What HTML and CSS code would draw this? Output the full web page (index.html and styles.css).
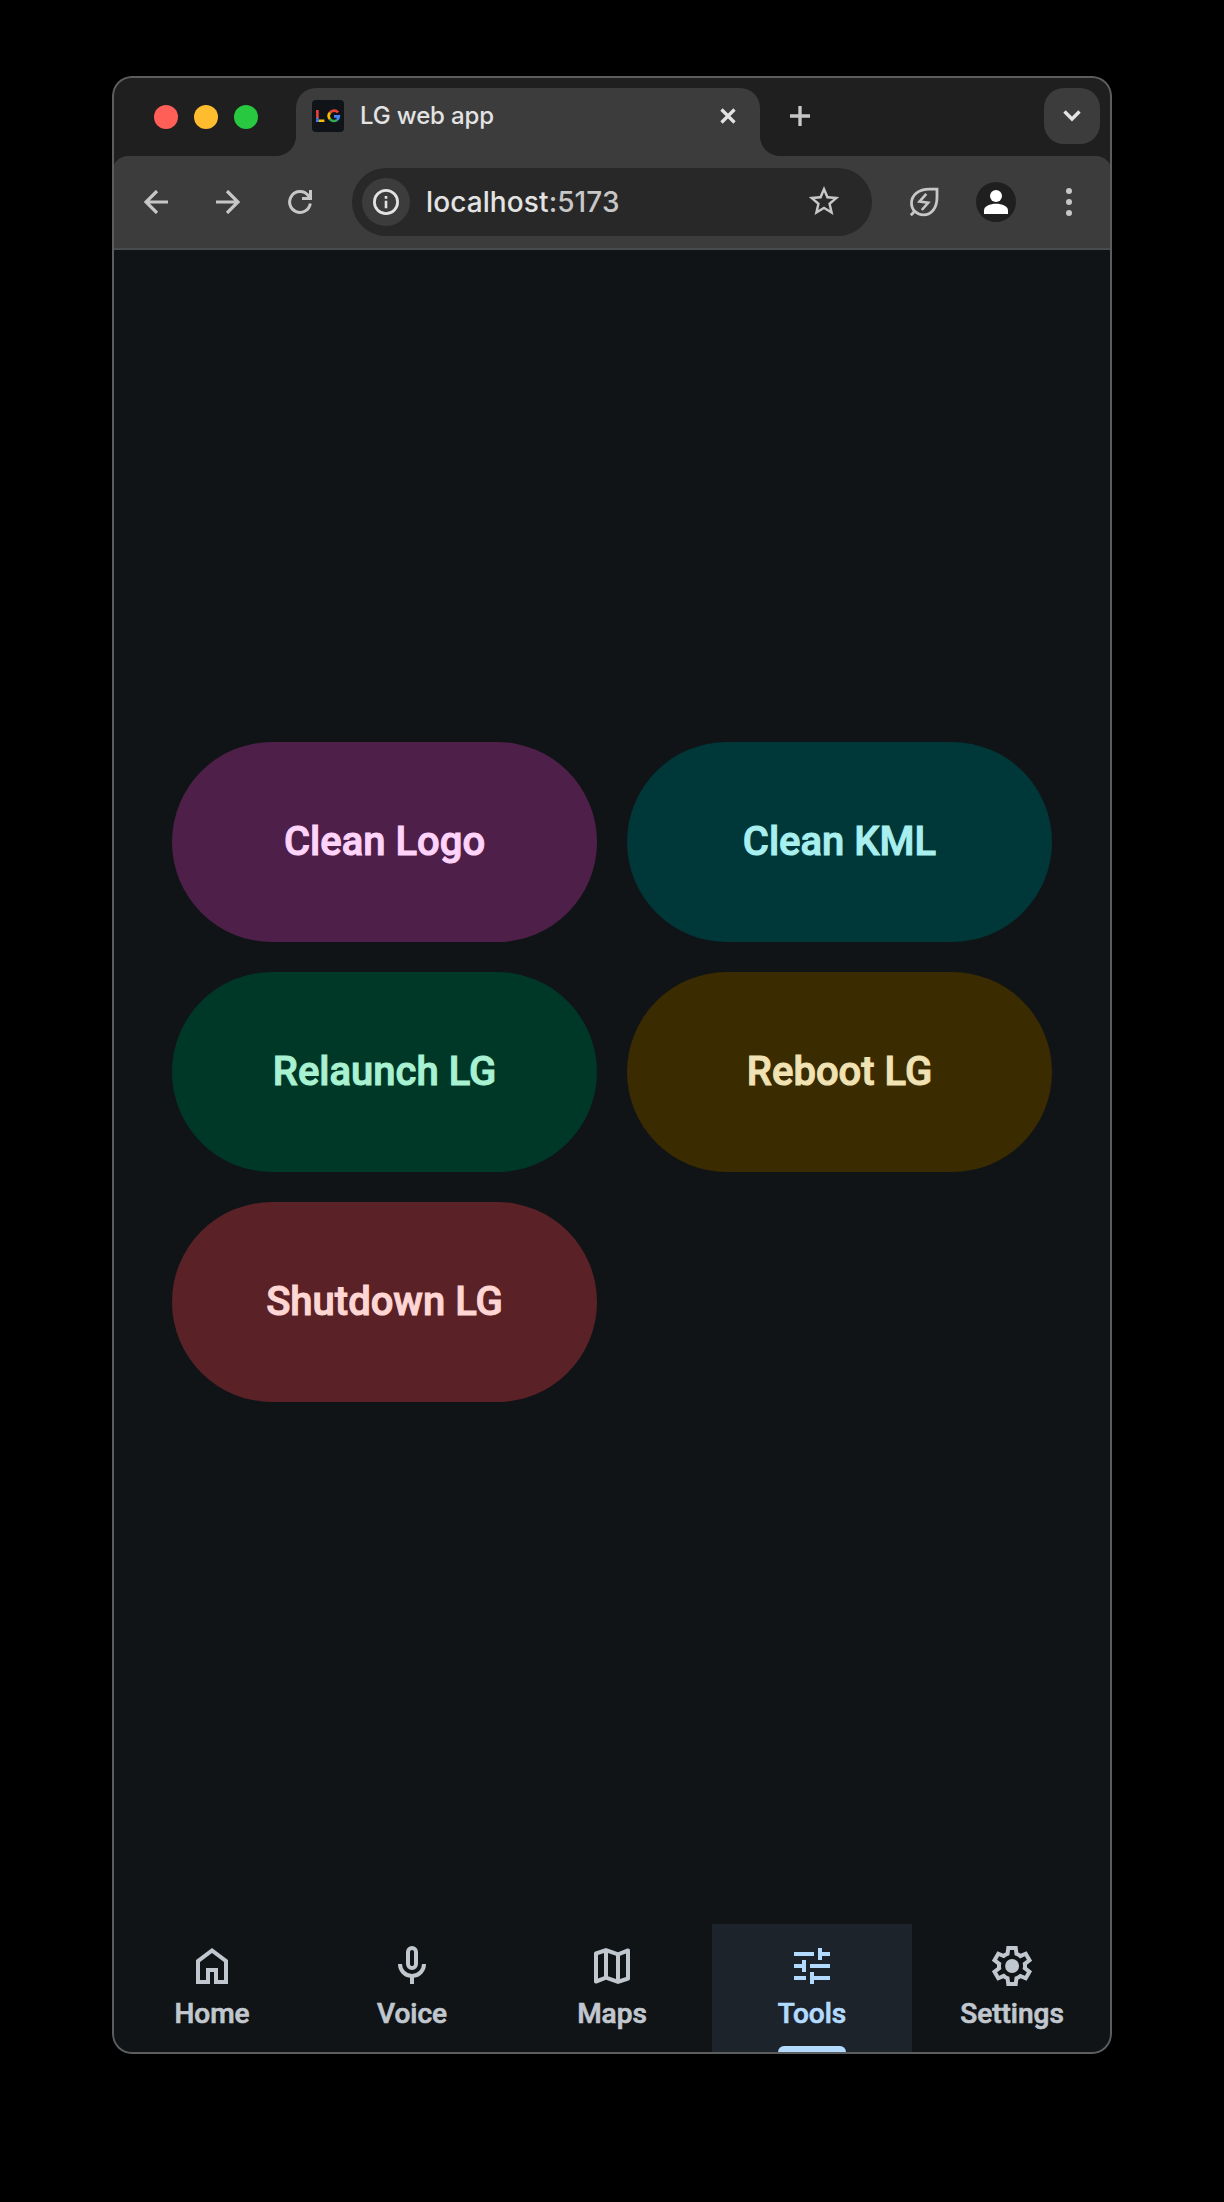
FILE: index.html
```html
<!DOCTYPE html>
<html lang="en">
<head>
<meta charset="utf-8">
<title>LG web app</title>
<link rel="stylesheet" href="styles.css">
</head>
<body>
<div class="window">
  <header class="tabstrip">
    <div class="lights"><span class="light red"></span><span class="light yellow"></span><span class="light green"></span></div>
    <div class="tab">
      <svg class="favicon" viewBox="0 0 32 32">
        <rect width="32" height="32" rx="4" fill="#101418"/>
        <path d="M5.400 10v8" stroke="#ea4335" stroke-width="2.600"/>
        <path d="M4.100 20.700H7" stroke="#4285f4" stroke-width="2.600"/>
        <path d="M4.100 18h2.600v1.500H4.100z" fill="#4285f4"/>
        <path d="M7 20.700h5.400" stroke="#fbbc04" stroke-width="2.600"/>
        <g fill="none" stroke-width="2.700">
          <path d="M26 12.400A5.200 5.200 0 0 0 18 12.600" stroke="#ea4335"/>
          <path d="M18 12.600A5.200 5.200 0 0 0 18 19.200" stroke="#fbbc04"/>
          <path d="M18 19.200A5.200 5.200 0 0 0 25 20" stroke="#34a853"/>
          <path d="M25 20A5.200 5.200 0 0 0 26.800 16.400H22" stroke="#4285f4"/>
        </g>
      </svg>
      <span class="tab-title">LG web app</span>
      <svg class="tab-close" viewBox="0 0 16 16"><path d="M1.500 1.500l13 13M14.500 1.500l-13 13" stroke="#e3e3e3" stroke-width="3.200"/></svg>
    </div>
    <svg class="new-tab" viewBox="0 0 20 20"><path d="M10 0v20M0 10h20" stroke="#c7c7c7" stroke-width="3.400"/></svg>
    <div class="tab-search"><svg width="18" height="12" viewBox="0 0 18 12"><path d="M1.500 1.500L9 9l7.500-7.500" fill="none" stroke="#e3e3e3" stroke-width="3.400"/></svg></div>
  </header>
  <div class="toolbar">
    <svg class="nav-btn back" viewBox="0 0 24 24"><path d="M24 12H2M13 1L2 12l11 11" fill="none" stroke="#c7c7c7" stroke-width="3.200"/></svg>
    <svg class="nav-btn forward" viewBox="0 0 24 24"><path d="M0 12h22M11 1l11 11-11 11" fill="none" stroke="#c7c7c7" stroke-width="3.200"/></svg>
    <svg class="nav-btn reload" viewBox="0 0 24 24"><path d="M22.300 13.500A10.400 10.400 0 1 1 20 5.300L22.500 8.500M22.500 0v8.500H14" fill="none" stroke="#c7c7c7" stroke-width="3"/></svg>
    <div class="omnibox">
      <span class="site-info"><svg width="26" height="26" viewBox="0 0 26 26"><circle cx="13" cy="13" r="11.600" fill="none" stroke="#e3e3e3" stroke-width="2.800"/><path d="M13 11.800v7.400M13 7v2.700" stroke="#e3e3e3" stroke-width="2.600"/></svg></span>
      <span class="url">localhost<span class="port">:5173</span></span>
      <svg class="star" viewBox="1.500 2 21 21"><path fill="#c7c7c7" d="M22 9.240l-7.190-.62L12 2 9.190 8.630 2 9.240l5.460 4.730L5.820 21 12 17.270 18.180 21l-1.630-7.030L22 9.240zM12 15.400l-3.760 2.270 1-4.280-3.320-2.880 4.380-.38L12 6.100l1.710 4.040 4.380.38-3.320 2.880 1 4.280L12 15.400z"/></svg>
    </div>
    <svg class="leaf" viewBox="0 0 32 32"><g fill="none" stroke="#c7c7c7" stroke-width="2.800"><path d="M29 3.200H21.500C10.500 3.200 3.500 9 3.500 17.200C3.500 24 8.800 28.800 15.500 28.800C23.500 28.800 29 22 29 11.500Z"/><path d="M2.800 29.200L7.500 24.500"/><path d="M18.300 7.800L11.500 15.600l8.700 1.200L13.800 24" stroke-width="2.600"/></g></svg>
    <svg class="avatar" viewBox="0 0 40 40"><circle cx="20" cy="20" r="20" fill="#1f1f1f"/><circle cx="20" cy="14" r="6" fill="#fff"/><path d="M8 32v-3.500C8 24 14 21.700 20 21.700S32 24 32 28.500V32z" fill="#fff"/></svg>
    <svg class="menu" viewBox="0 0 6 28"><g fill="#c7c7c7"><circle cx="3" cy="3" r="3"/><circle cx="3" cy="14" r="3"/><circle cx="3" cy="25" r="3"/></g></svg>
  </div>
  <main class="page">
    <div class="actions">
      <button class="action purple">Clean Logo</button>
      <button class="action teal">Clean KML</button>
      <button class="action forest">Relaunch LG</button>
      <button class="action amber">Reboot LG</button>
      <button class="action maroon">Shutdown LG</button>
    </div>
  </main>
  <nav class="bottom-nav">
    <a class="item"><svg viewBox="0 -960 960 960"><path d="M240-200h120v-240h240v240h120v-360L480-740 240-560v360Zm-80 80v-480l320-240 320 240v480H520v-240h-80v240H160Z"/></svg><span class="label">Home</span></a>
    <a class="item"><svg viewBox="0 -960 960 960"><path d="M480-400q-50 0-85-35t-35-85v-240q0-50 35-85t85-35q50 0 85 35t35 85v240q0 50-35 85t-85 35Zm0-240Zm-40 520v-123q-104-14-172-93t-68-184h80q0 83 58.500 141.500T480-320q83 0 141.500-58.500T680-520h80q0 105-68 184t-172 93v123h-80Zm40-360q17 0 28.500-11.500T520-520v-240q0-17-11.500-28.500T480-800q-17 0-28.500 11.500T440-760v240q0 17 11.500 28.500T480-480Z"/></svg><span class="label">Voice</span></a>
    <a class="item"><svg viewBox="0 -960 960 960"><path d="m600-120-240-84-186 72q-20 8-37-4.500T120-170v-560q0-13 7.500-23t20.500-15l212-72 240 84 186-72q20-8 37 4.500t17 33.500v560q0 13-7.500 23T812-192l-212 72Zm-40-98v-468l-160-56v468l160 56Zm80 0 120-40v-474l-120 46v468Zm-440-10 120-46v-468l-120 40v474Z"/></svg><span class="label">Maps</span></a>
    <a class="item active"><svg viewBox="0 -960 960 960"><path d="M440-120v-240h80v80h320v80H520v80h-80Zm-320-80v-80h240v80H120Zm160-160v-80H120v-80h160v-80h80v240h-80Zm160-80v-80h400v80H440Zm160-160v-240h80v80h160v80H680v80h-80Zm-480-80v-80h400v80H120Z"/></svg><span class="label">Tools</span></a>
    <a class="item"><svg viewBox="0 -960 960 960"><path d="m370-80-16-128q-13-5-24.500-12T307-235l-119 50L78-375l103-78q-1-7-1-13.500v-27q0-6.500 1-13.500L78-585l110-190 119 50q11-8 23-15t24-12l16-128h220l16 128q13 5 24.500 12t22.500 15l119-50 110 190-103 78q1 7 1 13.500v27q0 6.500-2 13.500l103 78-110 190-118-50q-11 8-23 15t-24 12L590-80H370Zm70-80h79l14-106q31-8 57.500-23.500T639-327l99 41 39-68-86-65q5-14 7-29.500t2-31.500q0-16-2-31.500t-7-29.500l86-65-39-68-99 42q-22-23-48.500-38.500T533-694l-13-106h-79l-14 106q-31 8-57.500 23.500T321-633l-99-41-39 68 86 64q-5 15-7 30t-2 32q0 16 2 31t7 30l-86 65 39 68 99-42q22 23 48.500 38.500T427-266l13 106Zm42-180q58 0 99-41t41-99q0-58-41-99t-99-41q-59 0-99.500 41T342-480q0 58 40.500 99t99.500 41Z"/></svg><span class="label">Settings</span></a>
  </nav>
</div>
</body>
</html>
```

FILE: styles.css
```css
* { box-sizing: border-box; }
body { margin: 0; height: 2202px; padding: 76px 112px 148px; background: #000; overflow: hidden; }
svg { display: block; flex: none; }
.window { position: relative; display: flex; flex-direction: column; width: 1000px; height: 1978px; border-radius: 20px; overflow: hidden; background: linear-gradient(#1f1f1f 100px, #101417 100px); }
.window::after { content: ""; position: absolute; inset: 0; border: 2px solid #5c5d5e; border-radius: 20px; pointer-events: none; }

.tabstrip { display: flex; height: 80px; padding: 12px 12px 0 42px; font-family: Inter, sans-serif; }
.lights { display: flex; gap: 16px; padding-top: 17px; width: 142px; }
.light { width: 24px; height: 24px; border-radius: 50%; }
.red { background: #ff5f57; }
.yellow { background: #febc2e; }
.green { background: #28c840; }
.tab { position: relative; display: flex; width: 464px; height: 68px; padding: 12px 24px 0 16px; background: #3c3c3c; border-radius: 20px 20px 0 0; }
.tab::before, .tab::after { content: ""; position: absolute; bottom: 0; width: 20px; height: 20px; }
.tab::before { left: -20px; background: radial-gradient(circle at 0 0, transparent 19.500px, #3c3c3c 20.500px); }
.tab::after { right: -20px; background: radial-gradient(circle at 100% 0, transparent 19.500px, #3c3c3c 20.500px); }
.favicon { width: 32px; height: 32px; }
.tab-title { flex: 1; margin-left: 16px; font-size: 24px; font-weight: 450; line-height: 32px; letter-spacing: -0.15px; color: #e3e3e3; white-space: nowrap; }
.tab-close { width: 16px; height: 16px; margin-top: 8px; }
.new-tab { width: 20px; height: 20px; margin: 18px 0 0 30px; }
.tab-search { display: flex; align-items: center; justify-content: center; width: 56px; height: 56px; margin-left: auto; border-radius: 20px; background: #3c3c3c; }

.toolbar { display: flex; align-items: center; height: 94px; padding: 0 40px 0 32px; background: #3c3c3c; border-bottom: 2px solid #4a4b4c; border-radius: 16px 16px 0 0; font-family: Inter, sans-serif; }
.nav-btn { width: 24px; height: 24px; }
.forward, .reload { margin-left: 48px; }
.omnibox { display: flex; align-items: center; width: 520px; height: 68px; margin-left: 40px; padding: 0 32px 0 10px; border-radius: 34px; background: #282828; }
.site-info { display: flex; align-items: center; justify-content: center; width: 48px; height: 48px; border-radius: 50%; background: #3c3c3c; }
.url { flex: 1; margin-left: 16px; font-size: 28px; font-weight: 450; line-height: 36px; letter-spacing: 0.1px; color: #e3e3e3; white-space: nowrap; }
.port { color: #c7c7c7; }
.star { width: 32px; height: 32px; }
.leaf { width: 32px; height: 32px; margin-left: 36px; }
.avatar { width: 40px; height: 40px; margin-left: 36px; }
.menu { width: 6px; height: 28px; margin-left: auto; }

.page { flex: 1; display: flex; flex-direction: column; justify-content: center; padding: 0 60px 30px; font-family: Roboto, sans-serif; }
.actions { display: grid; grid-template-columns: 1fr 1fr; gap: 30px; }
.action { height: 200px; border: 0; border-radius: 100px; font: 500 40px/48px Roboto, sans-serif; -webkit-text-stroke: 1px currentColor; }
.purple { background: #4e2049; color: #ffd3fa; }
.teal { background: #003738; color: #a8efef; }
.forest { background: #003827; color: #a8f2d2; }
.amber { background: #3b2b00; color: #f0e2b3; }
.maroon { background: #5a2226; color: #ffd6d4; }

.bottom-nav { display: flex; height: 130px; font-family: Roboto, sans-serif; }
.item { position: relative; display: flex; flex: 1; flex-direction: column; align-items: center; padding-top: 18px; color: #c1c7ce; }
.item svg { width: 48px; height: 48px; fill: currentColor; }
.label { margin-top: 6px; font-size: 28px; font-weight: 500; line-height: 36px; -webkit-text-stroke: 0.7px currentColor; }
.active { background: #1d232a; color: #b3dbff; }
.active::after { content: ""; position: absolute; bottom: 2px; width: 68px; height: 6px; border-radius: 6px 6px 0 0; background: #b3dbff; }
```
